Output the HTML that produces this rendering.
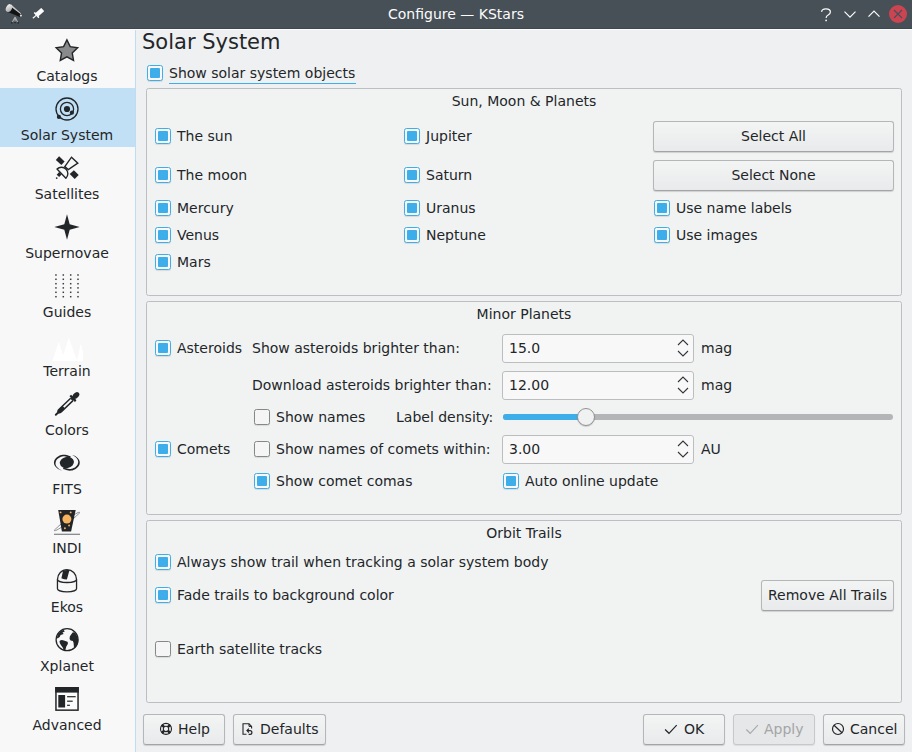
<!DOCTYPE html>
<html>
<head>
<meta charset="utf-8">
<title>Configure — KStars</title>
<style>
html,body{margin:0;padding:0;}
body{width:912px;height:752px;overflow:hidden;background:#eff0f1;position:relative;
 font-family:"DejaVu Sans","Liberation Sans",sans-serif;font-size:14px;color:#232629;}
div,span{box-sizing:border-box;}
.abs{position:absolute;}
#titlebar{left:0;top:0;width:912px;height:29px;background:#475057;}
#title{left:0;top:4px;width:912px;height:20px;line-height:20px;text-align:center;color:#fcfcfc;white-space:nowrap;}
#sidebar{left:0;top:29px;width:136px;height:723px;background:#f8f8f8;border-right:1px solid #bfdcf0;}
.item{position:absolute;left:0;width:135px;height:59px;}
.item.sel{background:#c2e0f5;}
.item .lbl{position:absolute;left:0;width:134px;top:37px;height:20px;line-height:20px;text-align:center;white-space:nowrap;}
.item svg{position:absolute;left:55px;top:9px;width:24px;height:24px;overflow:visible;}
.t{position:absolute;height:20px;line-height:20px;white-space:nowrap;}
.cb{position:absolute;width:16px;height:16px;border:1px solid #3daee9;border-radius:2.5px;background:#f8f7f5;box-shadow:0 1px 1px rgba(0,0,0,.10);}
.cb::after{content:"";position:absolute;left:2px;top:2px;width:10px;height:10px;background:#3daee9;border-radius:1px;}
.cb.off{border-color:#85878a;background:#f5f5f6;}
.cb.off::after{display:none;}
.grp{position:absolute;border:1px solid #bcbfc1;border-radius:2.5px;background:#f1f3f3;}
.btn{position:absolute;border:1px solid #b4b6b8;border-bottom-color:#a2a4a6;border-radius:3px;background:linear-gradient(#f3f4f4,#e9eaeb);box-shadow:0 1px 1px rgba(0,0,0,.14);}
.btn.dis{background:#e6e7e8;border-color:#c6c8c9;color:#a3a5a7;box-shadow:0 1px 1px rgba(0,0,0,.08);}
.spin{position:absolute;border:1px solid #bbbdbf;border-radius:3px;background:#f8f8f8;}
.ic{position:absolute;overflow:visible;}
</style>
</head>
<body>
<div id="titlebar" class="abs"></div>
<div class="abs" style="left:0;top:28px;width:912px;height:1px;background:#3f474d"></div>
<div id="title" class="abs">Configure — KStars</div>
<svg class="ic" style="left:0;top:0" width="64" height="29" viewBox="0 0 64 29">
<defs><linearGradient id="tg" x1="0" y1="0" x2="1" y2="1"><stop offset="0" stop-color="#ffffff"/><stop offset="1" stop-color="#9a9a9a"/></linearGradient></defs>
<path d="M15.1,17 L11.9,23 M15.1,17 L18,23 M15.1,17 L15.1,22.5" stroke="#a9acae" stroke-width="1.1" fill="none"/>
<rect x="11" y="22" width="1.8" height="1.6" fill="#2a2d30"/><rect x="14.2" y="21.6" width="1.8" height="1.6" fill="#2a2d30"/><rect x="17.2" y="22" width="1.8" height="1.6" fill="#2a2d30"/>
<path d="M10.6,4.3 L21.6,14.0 L20.0,16.9 L7.2,11.8 Z" fill="#111315"/>
<path d="M11.2,4.6 L21.2,13.6 L20.9,14.3 L10.2,6.2 Z" fill="#e8e8e8" opacity=".85"/>
<ellipse cx="9.0" cy="8.1" rx="2.9" ry="4.1" transform="rotate(28 9.0 8.1)" fill="url(#tg)"/>
<circle cx="20.9" cy="15.6" r="1.1" fill="#d8d8d8"/>
<g transform="translate(36.6,15.0) rotate(-41.6)" fill="#fcfcfc">
<rect x="0.4" y="-2.25" width="7.8" height="4.5" rx="0.5"/>
<rect x="-0.9" y="-3.5" width="1.7" height="7.0" rx="0.5"/>
<rect x="-5.0" y="-0.6" width="4.4" height="1.2"/>
</g>
</svg>
<svg class="ic" style="left:812px;top:0" width="100" height="29" viewBox="812 0 100 29">
<path d="M821.6,11.9 Q821.8,8.9 826.0,8.9 Q830.4,8.9 830.4,12.0 Q830.4,13.8 828.2,15.0 Q826.1,16.1 826.1,18.0" fill="none" stroke="#fcfcfc" stroke-width="1.2"/>
<circle cx="826.1" cy="20.4" r="0.85" fill="#fcfcfc"/>
<path d="M844.5,11.7 L850,17.2 L855.5,11.7" fill="none" stroke="#fcfcfc" stroke-width="1.2"/>
<path d="M868.5,16.6 L874,11.1 L879.5,16.6" fill="none" stroke="#fcfcfc" stroke-width="1.2"/>
<circle cx="898" cy="14" r="9" fill="#cc4452"/>
<path d="M894,10 L902,18 M902,10 L894,18" fill="none" stroke="#475057" stroke-width="1.2"/>
</svg>

<div id="sidebar" class="abs"></div>
<div class="abs" style="left:0;top:29px;width:912px;height:1px;background:#fafbfb"></div>
<div class="item" style="top:29px"><svg viewBox="0 0 24 24"><polygon points="11.90,1.90 15.19,8.67 22.65,9.71 17.23,14.93 18.54,22.34 11.90,18.80 5.26,22.34 6.57,14.93 1.15,9.71 8.61,8.67" fill="#888a8b" stroke="#232629" stroke-width="1.4" stroke-linejoin="miter"/></svg><div class="lbl">Catalogs</div></div>
<div class="item sel" style="top:88px"><svg viewBox="0 0 24 24"><circle cx="12" cy="12" r="11" fill="none" stroke="#232629" stroke-width="1.3"/><circle cx="12" cy="12" r="6.6" fill="none" stroke="#232629" stroke-width="1.3"/><circle cx="12" cy="12" r="3.1" fill="#232629"/><circle cx="16.9" cy="15.7" r="2.1" fill="#232629"/><circle cx="3.9" cy="19.9" r="2.1" fill="#232629"/></svg><div class="lbl">Solar System</div></div>
<div class="item" style="top:147px"><svg viewBox="0 0 24 24"><polygon points="4.1,0.2 9.6,5.6 6.4,8.9 0.8,4.0" fill="#232629"/><polygon points="18.9,14.3 23.7,19.0 19.7,23.1 14.7,17.9" fill="#232629"/><polygon points="16.5,1.2 22.8,7.2 13.3,13.6 9.8,10.6" fill="none" stroke="#232629" stroke-width="1.4"/><path d="M2.0,13.1 A6.4,6.4 0 0 1 10.9,22.3 Z" fill="#f8f8f8" stroke="#232629" stroke-width="1.4" stroke-linejoin="round"/><path d="M5.4,17.3 L2.9,19.9" stroke="#232629" stroke-width="3.4" fill="none"/><circle cx="1.7" cy="22.1" r="0.9" fill="#232629"/></svg><div class="lbl">Satellites</div></div>
<div class="item" style="top:206px"><svg viewBox="0 0 24 24"><path transform="translate(12,12)" d="M0,-12.7 L2.7,-2.7 L12.7,0 L2.7,2.7 L0,12.7 L-2.7,2.7 L-12.7,0 L-2.7,-2.7 Z" fill="#232629"/></svg><div class="lbl">Supernovae</div></div>
<div class="item" style="top:265px"><svg viewBox="0 0 24 24"><rect x="0.20" y="0.25" width="1.5" height="1.5" fill="#3a3d40"/><rect x="0.20" y="4.55" width="1.5" height="1.5" fill="#3a3d40"/><rect x="0.20" y="8.95" width="1.5" height="1.5" fill="#3a3d40"/><rect x="0.20" y="13.15" width="1.5" height="1.5" fill="#3a3d40"/><rect x="0.20" y="17.55" width="1.5" height="1.5" fill="#3a3d40"/><rect x="0.20" y="21.95" width="1.5" height="1.5" fill="#3a3d40"/><rect x="7.55" y="0.25" width="1.5" height="1.5" fill="#3a3d40"/><rect x="7.55" y="4.55" width="1.5" height="1.5" fill="#3a3d40"/><rect x="7.55" y="8.95" width="1.5" height="1.5" fill="#3a3d40"/><rect x="7.55" y="13.15" width="1.5" height="1.5" fill="#3a3d40"/><rect x="7.55" y="17.55" width="1.5" height="1.5" fill="#3a3d40"/><rect x="7.55" y="21.95" width="1.5" height="1.5" fill="#3a3d40"/><rect x="14.95" y="0.25" width="1.5" height="1.5" fill="#3a3d40"/><rect x="14.95" y="4.55" width="1.5" height="1.5" fill="#3a3d40"/><rect x="14.95" y="8.95" width="1.5" height="1.5" fill="#3a3d40"/><rect x="14.95" y="13.15" width="1.5" height="1.5" fill="#3a3d40"/><rect x="14.95" y="17.55" width="1.5" height="1.5" fill="#3a3d40"/><rect x="14.95" y="21.95" width="1.5" height="1.5" fill="#3a3d40"/><rect x="22.25" y="0.25" width="1.5" height="1.5" fill="#3a3d40"/><rect x="22.25" y="4.55" width="1.5" height="1.5" fill="#3a3d40"/><rect x="22.25" y="8.95" width="1.5" height="1.5" fill="#3a3d40"/><rect x="22.25" y="13.15" width="1.5" height="1.5" fill="#3a3d40"/><rect x="22.25" y="17.55" width="1.5" height="1.5" fill="#3a3d40"/><rect x="22.25" y="21.95" width="1.5" height="1.5" fill="#3a3d40"/></svg><div class="lbl">Guides</div></div>
<div class="item" style="top:324px"><svg viewBox="0 0 24 24"><polygon points="-2.6,27.9 3.7,8.7 7.9,21.5 8.5,21.5 13.7,4.8 21.5,26.0 22.5,26.0 25.8,10.3 28.0,19.0 28.0,27.9" fill="#ffffff"/></svg><div class="lbl">Terrain</div></div>
<div class="item" style="top:383px"><svg viewBox="0 0 24 24"><g transform="translate(0.6,23) rotate(-43.9)"><path d="M0.3,0 L4,0" stroke="#232629" stroke-width="1.9" stroke-linecap="round"/><path d="M3.0,0 Q3.2,-2.4 6.5,-2.4 L22.5,-2.4 L22.5,2.4 L6.5,2.4 Q3.2,2.4 3.0,0Z" fill="#232629"/><rect x="11.3" y="-0.95" width="11.2" height="1.9" fill="#fcfcfc"/><rect x="22.9" y="-4.0" width="2.4" height="8.0" rx="0.8" fill="#232629"/><rect x="22" y="-1.8" width="4" height="3.6" fill="#232629"/><ellipse cx="28.3" cy="0" rx="3.8" ry="2.7" fill="#232629"/></g></svg><div class="lbl">Colors</div></div>
<div class="item" style="top:442px"><svg viewBox="0 0 24 24"><ellipse cx="11.9" cy="11.5" rx="7.1" ry="5.6" fill="#232629" transform="rotate(-10 11.9 11.5)"/><path d="M15.72,5.31 L14.74,5.01 L13.74,4.68 L12.68,4.33 L11.53,4.02 L10.29,3.78 L8.98,3.66 L7.65,3.70 L6.36,3.92 L5.19,4.33 L4.09,4.82 L3.07,5.39 L2.14,6.02 L1.32,6.71 L0.61,7.45 L0.02,8.24 L-0.45,9.06 L-0.78,9.92 L-0.98,10.79 L-1.05,11.66 L-0.98,12.54 L-0.77,13.41 L-0.43,14.26 L0.04,15.09 L0.63,15.87 L1.35,16.62 L2.17,17.30 L3.10,17.93 L4.12,18.50 L5.23,18.99 L6.40,19.40 L6.48,19.22 L5.39,18.70 L4.40,18.13 L3.50,17.50 L2.71,16.83 L2.04,16.12 L1.48,15.39 L1.05,14.64 L0.74,13.89 L0.56,13.13 L0.50,12.39 L0.57,11.66 L0.76,10.96 L0.93,10.27 L1.22,9.59 L1.62,8.94 L2.14,8.31 L2.75,7.72 L3.46,7.17 L4.26,6.67 L5.14,6.22 L6.09,5.83 L7.11,5.51 L8.23,5.35 L9.38,5.36 L10.52,5.52 L11.58,5.77 L12.55,6.08 L13.43,6.40 L14.25,6.70 L15.06,6.93Z" fill="#232629"/><path d="M7.98,17.99 L8.96,18.29 L9.96,18.62 L11.02,18.97 L12.17,19.28 L13.41,19.52 L14.72,19.64 L16.05,19.60 L17.34,19.38 L18.51,18.97 L19.61,18.48 L20.63,17.91 L21.56,17.28 L22.38,16.59 L23.09,15.85 L23.68,15.06 L24.15,14.24 L24.48,13.38 L24.68,12.51 L24.75,11.64 L24.68,10.76 L24.47,9.89 L24.13,9.04 L23.66,8.21 L23.07,7.43 L22.35,6.68 L21.53,6.00 L20.60,5.37 L19.58,4.80 L18.47,4.31 L17.30,3.90 L17.22,4.08 L18.31,4.60 L19.30,5.17 L20.20,5.80 L20.99,6.47 L21.66,7.18 L22.22,7.91 L22.65,8.66 L22.96,9.41 L23.14,10.17 L23.20,10.91 L23.13,11.64 L22.94,12.34 L22.77,13.03 L22.48,13.71 L22.08,14.36 L21.56,14.99 L20.95,15.58 L20.24,16.13 L19.44,16.63 L18.56,17.08 L17.61,17.47 L16.59,17.79 L15.47,17.95 L14.32,17.94 L13.18,17.78 L12.12,17.53 L11.15,17.22 L10.27,16.90 L9.45,16.60 L8.64,16.37Z" fill="#232629"/></svg><div class="lbl">FITS</div></div>
<div class="item" style="top:501px"><svg viewBox="0 0 24 24"><ellipse cx="12" cy="11.5" rx="15.6" ry="1.6" fill="none" stroke="#8b8d8f" stroke-width="0.9" transform="rotate(-36.3 12 11.5)"/><polygon points="3.2,0 20.7,0 16.1,21.5 6.9,21.5" fill="#232629"/><circle cx="11.9" cy="9.1" r="4.5" fill="#f6b45e"/><circle cx="5.6" cy="2.4" r="0.95" fill="#f6b45e"/><circle cx="15.7" cy="2.4" r="0.95" fill="#f6b45e"/><circle cx="14.1" cy="15.5" r="0.95" fill="#f6b45e"/><circle cx="9.9" cy="18.3" r="0.95" fill="#f6b45e"/><rect x="-1" y="23.7" width="26" height="1.2" fill="#7f8183"/></svg><div class="lbl">INDI</div></div>
<div class="item" style="top:560px"><svg viewBox="0 0 24 24"><path d="M2.45,10.5 A9.55,9.95 0 0 1 21.55,10.5 L21.55,19.8 A9.55,3 0 0 1 2.45,19.8 Z" fill="none" stroke="#232629" stroke-width="1.3"/><path d="M2.45,10.5 A9.55,3 0 0 0 21.55,10.5" fill="none" stroke="#232629" stroke-width="1.3"/><path d="M8.0,1.9 Q11,0.4 14.5,1.1 L11.9,10.6 Q9,10.4 6.4,9.3 Z" fill="#232629"/></svg><div class="lbl">Ekos</div></div>
<div class="item" style="top:619px"><svg viewBox="0 0 24 24"><circle cx="12.1" cy="11.7" r="11.0" fill="none" stroke="#232629" stroke-width="1.3"/><path d="M1.9,9.4 Q3.4,4.0 8.5,1.7 L9.8,3.4 L7.5,4.5 L8.7,6.1 L5.6,7.0 L4.6,9.0 L2.5,10.4 Z" fill="#232629"/><path d="M4.5,12.9 Q6.5,11.5 8.9,12.5 L12.5,13.8 Q13.3,14.9 12.7,16.2 L11.3,18.4 L10.4,21.7 L8.9,22.4 L7.7,19.5 Q5.7,17.3 4.8,15.1 Z" fill="#232629"/><path d="M16.3,6.2 L17.9,4.2 L19.6,4.6 Q22.9,8.0 23.2,12.0 Q23.0,17.0 20.1,20.1 L18.9,18.7 L18.6,15.1 L17.9,13.0 L15.6,12.4 Q14.0,10.8 14.8,8.4 Z" fill="#232629"/></svg><div class="lbl">Xplanet</div></div>
<div class="item" style="top:678px"><svg viewBox="0 0 24 24"><rect x="0.95" y="0.75" width="22.1" height="22.4" fill="#fcfcfc" stroke="#232629" stroke-width="1.5"/><rect x="0.2" y="0" width="23.6" height="5.6" fill="#232629"/><rect x="3.3" y="8" width="6.8" height="12.5" fill="#232629"/><rect x="12.1" y="9.1" width="8.6" height="1.2" fill="#232629"/><rect x="12.1" y="13.6" width="5.6" height="1.2" fill="#232629"/><rect x="12.1" y="17.7" width="2.8" height="1.2" fill="#232629"/></svg><div class="lbl">Advanced</div></div>
<div class="abs" id="hd" style="left:142px;top:29px;height:26px;line-height:26px;font-size:21px;white-space:nowrap;">Solar System</div>
<div class="cb" style="left:147px;top:65px"></div>
<div class="t" style="left:169px;top:63px;">Show solar system objects</div>
<div class="abs" style="left:169px;top:83px;width:187px;height:1px;background:#3daee9"></div>
<div class="grp" style="left:146px;top:88px;width:756px;height:208px"></div>
<div class="t" style="left:146px;width:756px;text-align:center;top:91px">Sun, Moon &amp; Planets</div>
<div class="cb" style="left:155px;top:128px"></div>
<div class="t" style="left:177px;top:126px;">The sun</div>
<div class="cb" style="left:155px;top:167px"></div>
<div class="t" style="left:177px;top:165px;">The moon</div>
<div class="cb" style="left:155px;top:200px"></div>
<div class="t" style="left:177px;top:198px;">Mercury</div>
<div class="cb" style="left:155px;top:227px"></div>
<div class="t" style="left:177px;top:225px;">Venus</div>
<div class="cb" style="left:155px;top:254px"></div>
<div class="t" style="left:177px;top:252px;">Mars</div>
<div class="cb" style="left:404px;top:128px"></div>
<div class="t" style="left:426px;top:126px;">Jupiter</div>
<div class="cb" style="left:404px;top:167px"></div>
<div class="t" style="left:426px;top:165px;">Saturn</div>
<div class="cb" style="left:404px;top:200px"></div>
<div class="t" style="left:426px;top:198px;">Uranus</div>
<div class="cb" style="left:404px;top:227px"></div>
<div class="t" style="left:426px;top:225px;">Neptune</div>
<div class="btn " style="left:653px;top:121px;width:241px;height:31px"></div>
<div class="t" style="left:653px;width:241px;text-align:center;top:126px">Select All</div>
<div class="btn " style="left:653px;top:160px;width:241px;height:31px"></div>
<div class="t" style="left:653px;width:241px;text-align:center;top:165px">Select None</div>
<div class="cb" style="left:654px;top:200px"></div>
<div class="t" style="left:676px;top:198px;">Use name labels</div>
<div class="cb" style="left:654px;top:227px"></div>
<div class="t" style="left:676px;top:225px;">Use images</div>
<div class="grp" style="left:146px;top:301px;width:756px;height:214px"></div>
<div class="t" style="left:146px;width:756px;text-align:center;top:304px">Minor Planets</div>
<div class="cb" style="left:155px;top:340px"></div>
<div class="t" style="left:177px;top:338px;">Asteroids</div>
<div class="t" style="left:252px;top:338px;">Show asteroids brighter than:</div>
<div class="spin" style="left:502px;top:334px;width:192px;height:29px"></div>
<div class="t" style="left:509px;top:338px;">15.0</div>
<svg class="ic" style="left:676px;top:334px" width="16" height="29" viewBox="0 0 16 29"><path d="M2,11 L7,6 L12,11 M2,17 L7,22 L12,17" fill="none" stroke="#31363b" stroke-width="1.1"/></svg>
<div class="t" style="left:701px;top:338px;">mag</div>
<div class="t" style="left:252px;top:375px;">Download asteroids brighter than:</div>
<div class="spin" style="left:502px;top:371px;width:192px;height:29px"></div>
<div class="t" style="left:509px;top:375px;">12.00</div>
<svg class="ic" style="left:676px;top:371px" width="16" height="29" viewBox="0 0 16 29"><path d="M2,11 L7,6 L12,11 M2,17 L7,22 L12,17" fill="none" stroke="#31363b" stroke-width="1.1"/></svg>
<div class="t" style="left:701px;top:375px;">mag</div>
<div class="cb off" style="left:254px;top:409px"></div>
<div class="t" style="left:276px;top:407px;">Show names</div>
<div class="t" style="left:396px;top:407px;">Label density:</div>
<div class="abs" style="left:503px;top:414px;width:390px;height:6px;border-radius:3px;background:#b3b5b6"></div>
<div class="abs" style="left:503px;top:414px;width:85px;height:6px;border-radius:3px;background:#3daee9"></div>
<div class="abs" style="left:577px;top:408px;width:18px;height:18px;border-radius:9px;background:#f0f1f1;border:1px solid #909294;box-shadow:0 1px 1px rgba(0,0,0,.15)"></div>
<div class="cb" style="left:155px;top:441px"></div>
<div class="t" style="left:177px;top:439px;">Comets</div>
<div class="cb off" style="left:254px;top:441px"></div>
<div class="t" style="left:276px;top:439px;">Show names of comets within:</div>
<div class="spin" style="left:502px;top:435px;width:192px;height:29px"></div>
<div class="t" style="left:509px;top:439px;">3.00</div>
<svg class="ic" style="left:676px;top:435px" width="16" height="29" viewBox="0 0 16 29"><path d="M2,11 L7,6 L12,11 M2,17 L7,22 L12,17" fill="none" stroke="#31363b" stroke-width="1.1"/></svg>
<div class="t" style="left:701px;top:439px;">AU</div>
<div class="cb" style="left:254px;top:473px"></div>
<div class="t" style="left:276px;top:471px;">Show comet comas</div>
<div class="cb" style="left:503px;top:473px"></div>
<div class="t" style="left:525px;top:471px;">Auto online update</div>
<div class="grp" style="left:146px;top:520px;width:756px;height:183px"></div>
<div class="t" style="left:146px;width:756px;text-align:center;top:523px">Orbit Trails</div>
<div class="cb" style="left:155px;top:554px"></div>
<div class="t" style="left:177px;top:552px;">Always show trail when tracking a solar system body</div>
<div class="cb" style="left:155px;top:587px"></div>
<div class="t" style="left:177px;top:585px;">Fade trails to background color</div>
<div class="cb off" style="left:155px;top:641px"></div>
<div class="t" style="left:177px;top:639px;">Earth satellite tracks</div>
<div class="btn " style="left:761px;top:580px;width:133px;height:31px"></div>
<div class="t" style="left:761px;width:133px;text-align:center;top:585px">Remove All Trails</div>
<div class="btn " style="left:143px;top:714px;width:82px;height:31px"></div>
<div class="t" style="left:178px;top:719px;">Help</div>
<div class="btn " style="left:233px;top:714px;width:93px;height:31px"></div>
<div class="t" style="left:260px;top:719px;">Defaults</div>
<div class="btn " style="left:643px;top:714px;width:82px;height:31px"></div>
<div class="t" style="left:684px;top:719px;">OK</div>
<div class="btn dis" style="left:733px;top:714px;width:82px;height:31px"></div>
<div class="t" style="left:764px;top:719px;color:#a3a5a7">Apply</div>
<div class="btn " style="left:823px;top:714px;width:82px;height:31px"></div>
<div class="t" style="left:850px;top:719px;">Cancel</div>
<svg class="ic" style="left:136px;top:712px" width="776" height="40" viewBox="136 712 776 40">
<g fill="none" stroke="#232629">
<circle cx="166" cy="728.9" r="5.5" stroke-width="1.1"/>
<circle cx="166" cy="728.9" r="2.7" stroke-width="1.1"/>
<path d="M161.9,724.8 L164.2,727.1 M170.1,724.8 L167.8,727.1 M161.9,733.0 L164.2,730.7 M170.1,733.0 L167.8,730.7" stroke-width="2.5"/>
<path d="M246.5,734.3 H243 V723.8 H249 L251.6,726.4 V728.4" stroke-width="1.1"/>
<path d="M249,723.8 V726.4 H251.6" stroke-width="1"/>
<path d="M247.2,730.6 H250 A1.9,1.9 0 0 1 250,734.4 H248.6" stroke-width="1.2"/>
<path d="M248.9,728.7 L247,730.6 L248.9,732.5" stroke-width="1.2"/>
<path d="M665.1,729.5 L669,733.3 L676.7,725.2" stroke-width="1.2"/>
<path d="M746.3,729.5 L750.2,733.3 L757.9,725.2" stroke-width="1.2" stroke="#a9abad"/>
<circle cx="838" cy="729" r="5.5" stroke-width="1.2"/>
<path d="M834,725.2 L842,732.8" stroke-width="1.2"/>
</g>
</svg>

</body>
</html>
